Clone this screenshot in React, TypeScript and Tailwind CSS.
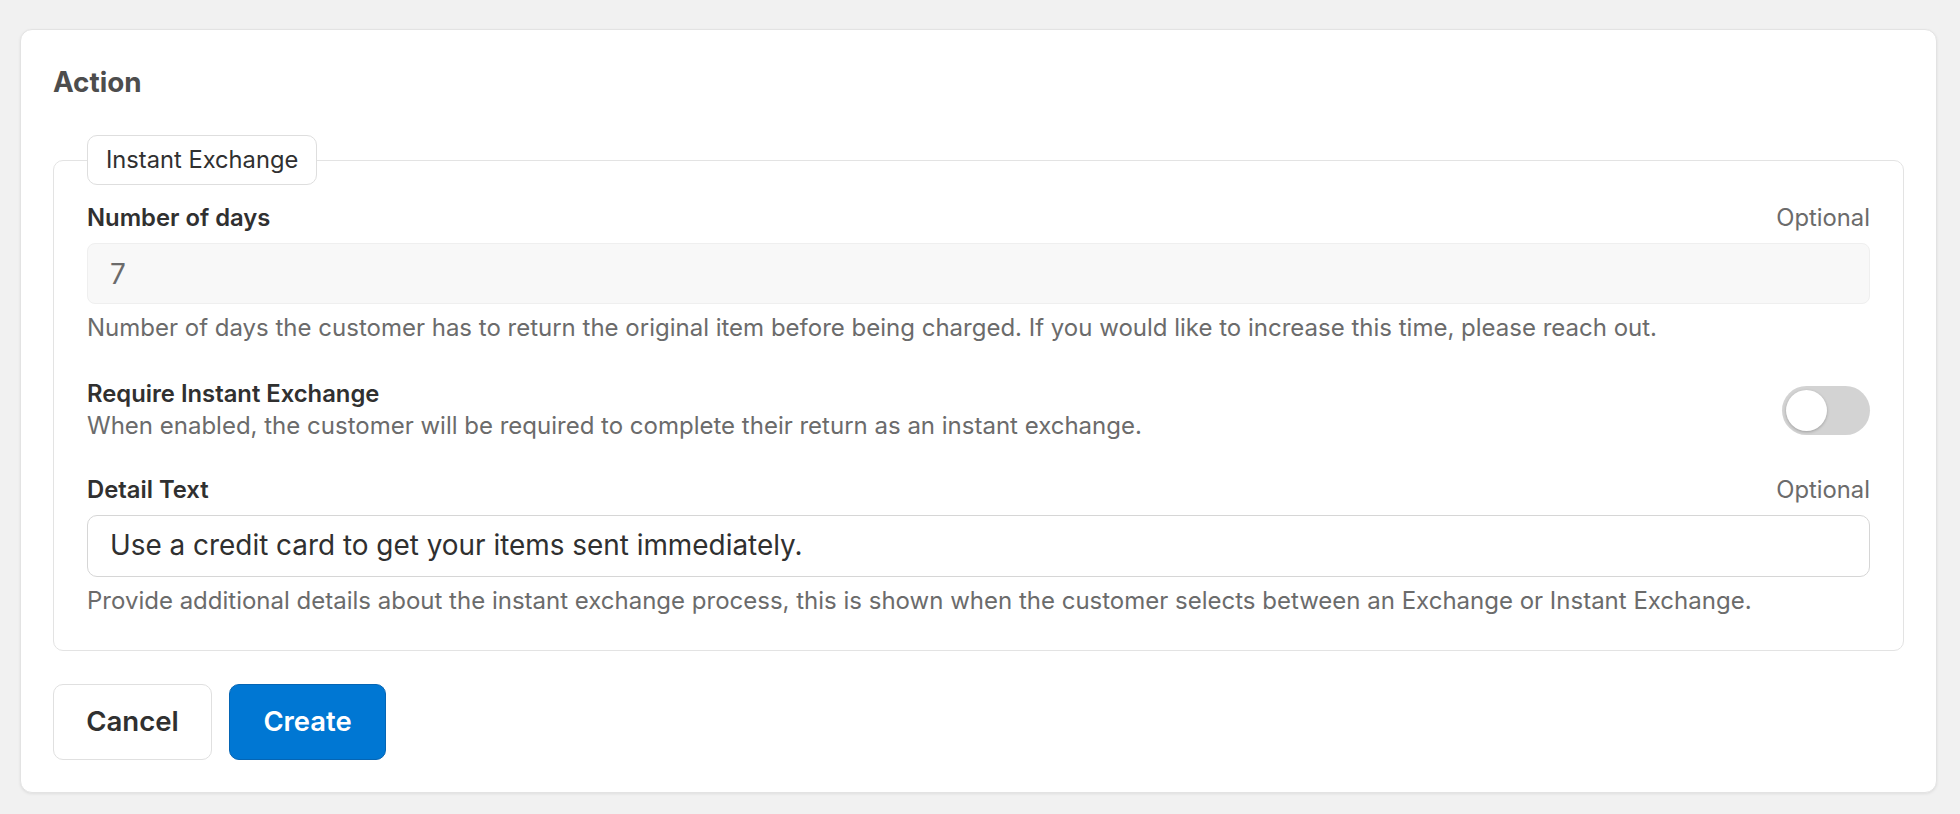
import React, { useState } from 'react';

const font = { fontFamily: 'Inter, "Noto Sans", sans-serif' };

const Label = ({ children, optional }: { children: React.ReactNode; optional?: boolean }) => (
  <div className="flex items-center justify-between">
    <span className="text-[23.8px] leading-[28px] font-semibold text-[#303030]">{children}</span>
    {optional && <span className="text-[23.8px] leading-[28px] text-[#6b6b6b]">Optional</span>}
  </div>
);

const Help = ({ children }: { children: React.ReactNode }) => (
  <p className="mt-[10px] text-[24px] leading-[28px] text-[#6b6b6b]">{children}</p>
);

export default function App() {
  const [required, setRequired] = useState(false);

  return (
    <div className="min-h-screen bg-[#f1f1f1] pt-[29px] pl-[20px] pr-[23px] pb-[21px]" style={font}>
      <div className="rounded-[12px] border border-[#e3e3e3] bg-white px-[32px] pt-[36px] pb-[32px] shadow-[0_1px_3px_rgba(0,0,0,0.08)]">
        <h2 className="text-[27.8px] leading-[32px] font-bold text-[#4d4d4d]">Action</h2>

        <fieldset className="mt-[37px] rounded-[10px] border border-[#e3e3e3] px-[33px] pt-[19px] pb-[35px]">
          <legend className="h-[50px] rounded-[10px] border-[1.5px] border-[#dedede] bg-white px-[18px] text-[23.7px] leading-[47px] text-[#303030]">
            Instant Exchange
          </legend>

          <Label optional>Number of days</Label>
          <div className="mt-[11px] flex h-[61px] items-center rounded-[8px] border border-[#efefef] bg-[#f8f8f8] px-[22px] text-[28px] text-[#6b6b6b]">
            7
          </div>
          <Help>
            Number of days the customer has to return the original item before being charged. If you would like to
            increase this time, please reach out.
          </Help>

          <div className="mt-[38px] flex items-center justify-between">
            <div>
              <div className="text-[23.8px] leading-[28px] font-semibold text-[#303030]">Require Instant Exchange</div>
              <div className="mt-[4px] text-[24px] leading-[28px] text-[#6b6b6b]">
                When enabled, the customer will be required to complete their return as an instant exchange.
              </div>
            </div>
            <button
              type="button"
              onClick={() => setRequired(!required)}
              className={`flex h-[49px] w-[88px] items-center rounded-full p-[4px] ${required ? 'bg-[#0077d0] justify-end' : 'bg-[#d3d3d3] justify-start'}`}
            >
              <span className="block h-[41px] w-[41px] rounded-full bg-white shadow-[0_1px_3px_rgba(0,0,0,0.25)]" />
            </button>
          </div>

          <div className="mt-[36px]">
            <Label optional>Detail Text</Label>
          </div>
          <div className="mt-[11px] flex h-[62px] items-center rounded-[10px] border-[1.5px] border-[#d6d6d6] bg-white px-[22px] text-[27.9px] text-[#303030]">
            Use a credit card to get your items sent immediately.
          </div>
          <Help>
            Provide additional details about the instant exchange process, this is shown when the customer selects
            between an Exchange or Instant Exchange.
          </Help>
        </fieldset>

        <div className="mt-[33px] flex gap-[17px]">
          <button className="h-[76px] w-[159px] rounded-[10px] border-[1.5px] border-[#e0e0e0] bg-white text-[27.6px] font-semibold text-[#303030]">
            Cancel
          </button>
          <button className="h-[76px] w-[157px] rounded-[10px] border-[1.5px] border-[#0565b4] bg-[#0077d3] text-[27.4px] font-semibold text-white">
            Create
          </button>
        </div>
      </div>
    </div>
  );
}
